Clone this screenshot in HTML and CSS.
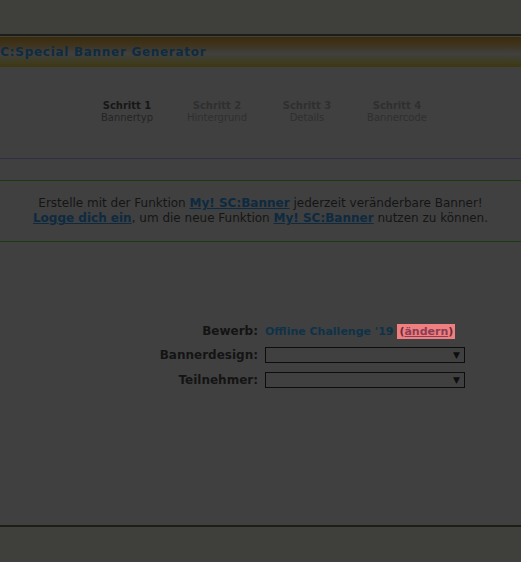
FILE: index.html
```html
<!DOCTYPE html>
<html lang="de">
<head>
<meta charset="utf-8">
<title>SC:Special Banner Generator</title>
<link rel="stylesheet" href="styles.css">
</head>
<body>
<div class="top"></div>
<div class="banner"><span class="banner-title">SC:Special Banner Generator</span></div>
<div class="steps">
  <div class="step active"><div class="step-title">Schritt 1</div><div class="step-sub">Bannertyp</div></div>
  <div class="step"><div class="step-title">Schritt 2</div><div class="step-sub">Hintergrund</div></div>
  <div class="step"><div class="step-title">Schritt 3</div><div class="step-sub">Details</div></div>
  <div class="step"><div class="step-title">Schritt 4</div><div class="step-sub">Bannercode</div></div>
</div>
<div class="info">
  <p>Erstelle mit der Funktion <a href="#">My! SC:Banner</a> jederzeit veränderbare Banner!<br>
  <a href="#">Logge dich ein</a>, um die neue Funktion <a href="#">My! SC:Banner</a> nutzen zu können.</p>
</div>
<div class="form">
  <div class="label">Bewerb:</div>
  <div class="value"><span class="contest">Offline Challenge '19</span> <span class="change">(<a href="#">ändern</a>)</span></div>
  <div class="label">Bannerdesign:</div>
  <div class="value"><div class="select"><span class="arrow">▼</span></div></div>
  <div class="label">Teilnehmer:</div>
  <div class="value"><div class="select"><span class="arrow">▼</span></div></div>
</div>
<div class="footer"></div>
</body>
</html>
```
FILE: styles.css
```css
html, body {
  margin: 0;
  padding: 0;
}
body {
  background: #404040;
  font-family: "DejaVu Sans", Verdana, sans-serif;
  color: #151515;
  width: 521px;
  height: 562px;
  overflow: hidden;
}
.top {
  height: 34px;
  background: #3f403b;
  border-bottom: 2px solid #1b1f17;
}
.banner {
  height: 30px;
  margin-top: 1px;
  background: linear-gradient(to bottom, #3b2b0c 0%, #3f3520 30%, #404040 55%, #3f3d2a 75%, #3d3810 100%);
  overflow: hidden;
  white-space: nowrap;
}
.banner-title {
  display: inline-block;
  margin-left: -9px;
  font-weight: bold;
  font-size: 12px;
  letter-spacing: 0.7px;
  line-height: 30px;
  color: #0e2b40;
}
.steps {
  display: flex;
  padding: 33px 0 0 82px;
  height: 58px;
  border-bottom: 1px solid #2e2e48;
}
.step {
  width: 90px;
  text-align: center;
  font-size: 10px;
  line-height: 12px;
  color: #2f2f2f;
}
.step-title {
  font-weight: bold;
}
.step.active .step-title {
  color: #171717;
}
.step.active .step-sub {
  color: #242424;
}
.info {
  margin-top: 21px;
  border-top: 1px solid #1c3a10;
  border-bottom: 1px solid #1c3a10;
  height: 60px;
  text-align: center;
  font-size: 12px;
  line-height: 15px;
}
.info p {
  margin: 15px 0 0 0;
}
.info a {
  color: #0d2a40;
  font-weight: bold;
}
.form {
  display: grid;
  grid-template-columns: 258px 200px;
  column-gap: 7px;
  row-gap: 9px;
  margin-top: 82px;
  font-size: 12px;
  align-items: center;
}
.label {
  text-align: right;
  font-weight: bold;
  color: #141414;
  font-size: 12px;
}
.value {
  white-space: nowrap;
  font-size: 11px;
  font-weight: bold;
}
.contest {
  color: #0f3248;
}
.change {
  background: #f08080;
  color: #6a2a3a;
  padding: 1px 2px;
}
.change a {
  color: #8a3d55;
}
.select {
  box-sizing: border-box;
  width: 200px;
  height: 16px;
  border: 1px solid #0d0d0d;
  position: relative;
}
.arrow {
  position: absolute;
  right: 4px;
  top: 0;
  font-size: 9px;
  line-height: 14px;
  color: #0d0d0d;
}
.footer {
  margin-top: 137px;
  border-top: 2px solid #1b1f17;
  height: 32px;
  background: #3f403b;
}
```
